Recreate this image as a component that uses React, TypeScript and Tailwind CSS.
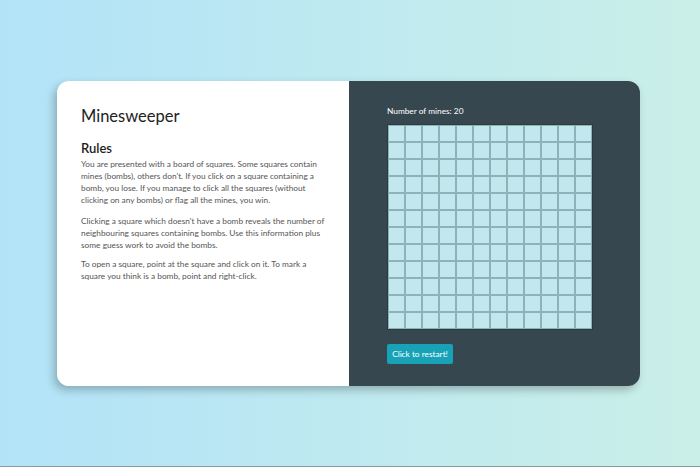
import React from "react";

export default function App() {
  const cells = Array.from({ length: 144 });
  return (
    <div
      className="h-[467px] w-full flex items-center justify-center bg-gradient-to-r from-[#b2e3f8] to-[#caefe8] border-b border-[#8a9a9a]"
      style={{ fontFamily: "Lato, 'Noto Sans', sans-serif" }}
    >
      <div className="flex w-[583px] h-[305px] rounded-[12px] overflow-hidden shadow-[-3px_4px_8px_rgba(0,0,0,0.25)] ml-[-3px]">
        <div className="w-[292px] bg-white pl-[24px] pr-[24px] pt-[25px]">
          <h1 className="text-[16.5px] leading-[20px] text-[#222] font-normal">Minesweeper</h1>
          <h2 className="mt-[14px] text-[13px] leading-[16px] font-semibold text-[#222]">Rules</h2>
          <div className="text-[8.3px] leading-[12px] text-[#555] mt-[2px]">
            <p>
              You are presented with a board of squares. Some squares contain mines (bombs), others don't. If you click on a square containing a bomb, you lose. If you manage to click all the squares (without clicking on any bombs) or flag all the mines, you win.
            </p>
            <p className="mt-[9px]">
              Clicking a square which doesn't have a bomb reveals the number of neighbouring squares containing bombs. Use this information plus some guess work to avoid the bombs.
            </p>
            <p className="mt-[7px]">
              To open a square, point at the square and click on it. To mark a square you think is a bomb, point and right-click.
            </p>
          </div>
        </div>
        <div className="w-[291px] bg-[#37474f] pl-[38px] pt-[24px]">
          <div className="text-[8.3px] leading-[12px] text-white">Number of mines: 20</div>
          <div className="mt-[7px] w-[206px] h-[206px] border border-[#2c3a40] grid grid-cols-12">
            {cells.map((_, i) => (
              <div key={i} className="w-[17px] h-[17px] border border-[#8bb3ba] bg-[#c2e8ee]" />
            ))}
          </div>
          <button className="mt-[14px] w-[66px] h-[20px] rounded-[2px] bg-[#17a2b8] text-white text-[8.3px] leading-[20px]">
            Click to restart!
          </button>
        </div>
      </div>
    </div>
  );
}
